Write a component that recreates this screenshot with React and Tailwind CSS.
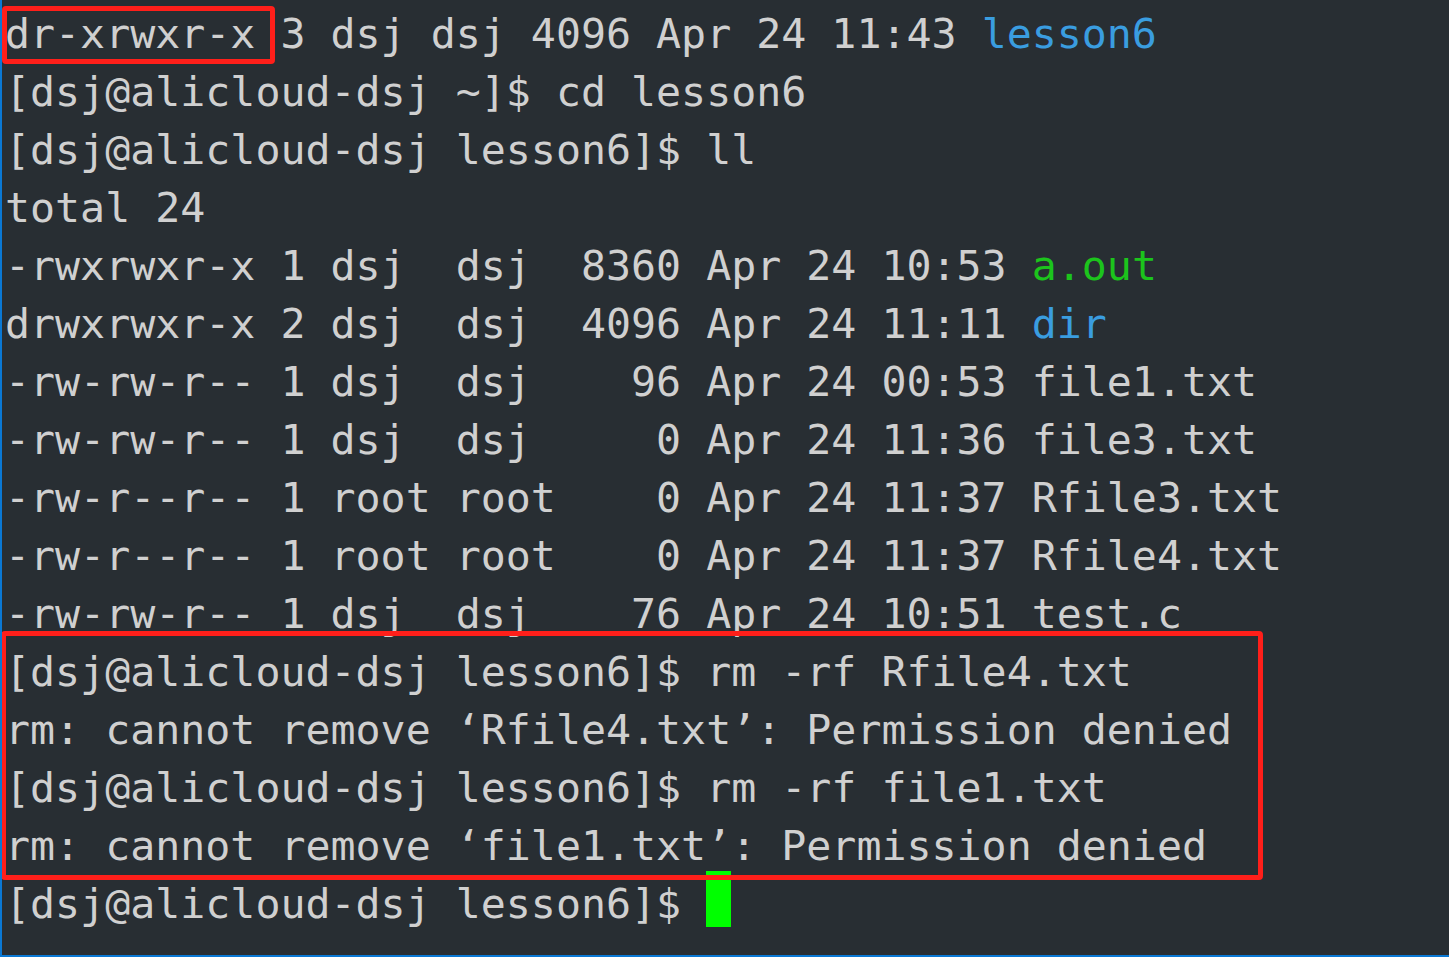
import React from "react";

const lines = [
  [["dr-xrwxr-x 3 dsj dsj 4096 Apr 24 11:43 "], ["lesson6", "text-[#3a9de0]"]],
  [["[dsj@alicloud-dsj ~]$ cd lesson6"]],
  [["[dsj@alicloud-dsj lesson6]$ ll"]],
  [["total 24"]],
  [["-rwxrwxr-x 1 dsj  dsj  8360 Apr 24 10:53 "], ["a.out", "text-[#1cc41c]"]],
  [["drwxrwxr-x 2 dsj  dsj  4096 Apr 24 11:11 "], ["dir", "text-[#3a9de0]"]],
  [["-rw-rw-r-- 1 dsj  dsj    96 Apr 24 00:53 file1.txt"]],
  [["-rw-rw-r-- 1 dsj  dsj     0 Apr 24 11:36 file3.txt"]],
  [["-rw-r--r-- 1 root root    0 Apr 24 11:37 Rfile3.txt"]],
  [["-rw-r--r-- 1 root root    0 Apr 24 11:37 Rfile4.txt"]],
  [["-rw-rw-r-- 1 dsj  dsj    76 Apr 24 10:51 test.c"]],
  [["[dsj@alicloud-dsj lesson6]$ rm -rf Rfile4.txt"]],
  [["rm: cannot remove \u2018Rfile4.txt\u2019: Permission denied"]],
  [["[dsj@alicloud-dsj lesson6]$ rm -rf file1.txt"]],
  [["rm: cannot remove \u2018file1.txt\u2019: Permission denied"]],
];

export default function App() {
  return (
    <div className="relative w-[1449px] h-[957px] overflow-hidden bg-[#282e33] border-l-2 border-b-2 border-[#0a78d4]">
      <div
        className="pt-[5px] pl-[3px] text-[#d0d0d0] text-[41.6px] leading-[58px] whitespace-pre"
        style={{ fontFamily: '"DejaVu Sans Mono", "Liberation Mono", monospace' }}
      >
        {lines.map((segs, i) => (
          <div key={i} className="h-[58px]">
            {segs.map(([t, c], j) => (
              <span key={j} className={c}>
                {t}
              </span>
            ))}
          </div>
        ))}
        <div className="h-[58px]">
          <span>[dsj@alicloud-dsj lesson6]$ </span>
          <span className="inline-block align-top -mt-[4px] w-[25px] h-[56px] bg-[#00ff00]" />
        </div>
      </div>
      <div className="absolute left-[0px] top-[6px] w-[273px] h-[58px] border-[5px] border-[#ff1f1a] rounded-[4px]" />
      <div className="absolute left-[-1px] top-[631px] w-[1262px] h-[249px] border-[5px] border-[#ff1f1a] rounded-[4px]" />
    </div>
  );
}
